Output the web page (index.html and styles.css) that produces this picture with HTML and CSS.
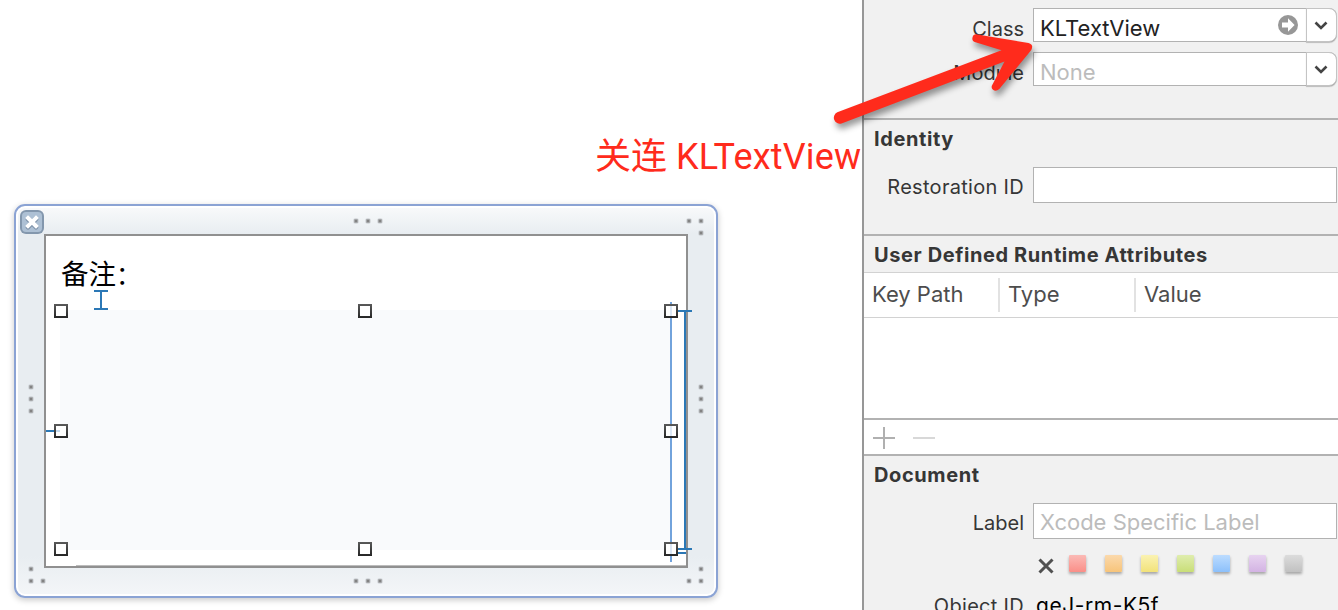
FILE: index.html
```html
<!DOCTYPE html>
<html lang="zh">
<head>
<meta charset="utf-8">
<title>KLTextView</title>
<link rel="stylesheet" href="styles.css">
</head>
<body>
<main class="canvas">
  <div class="note">关连 <span class="note-latin">KLTextView</span></div>
  <div class="frame">
    <div class="view">
      <div class="remark">备注<span class="colon">：</span></div>
      <div class="textview"></div>
    </div>
  </div>
  <svg class="guides" width="740" height="610" viewBox="0 0 740 610">
    <defs>
      <linearGradient id="h" x1="0" y1="0" x2="0" y2="1"><stop offset="0" stop-color="#5a5a5a"/><stop offset="1" stop-color="#262626"/></linearGradient>
      <g id="d"><circle r="3" fill="#a8adb2" opacity=".35"/><rect x="-2" y="-2" width="4" height="4" rx="1" fill="#a4a6a8"/><rect x="-1" y="-1" width="2" height="2" fill="#828282"/></g>
      <g id="k"><rect x="-7" y="-7" width="14" height="14" fill="url(#h)"/><rect x="-5" y="-5" width="10" height="10" fill="#fff"/></g>
    </defs>
    <rect x="20" y="210" width="24" height="24" rx="6" fill="#8397ad"/>
    <rect x="22" y="212" width="20" height="20" rx="4" fill="#adc0d4"/>
    <path d="M28 218l8 8M36 218l-8 8" transform="translate(0 1)" stroke="#8095ac" stroke-width="5" stroke-linecap="round"/>
    <path d="M28 218l8 8M36 218l-8 8" stroke="#fff" stroke-width="4" stroke-linecap="square"/>
    <g>
      <use href="#d" x="356" y="221"/><use href="#d" x="368" y="221"/><use href="#d" x="380" y="221"/>
      <use href="#d" x="689" y="221"/><use href="#d" x="701" y="221"/><use href="#d" x="701" y="233"/>
      <use href="#d" x="31" y="387"/><use href="#d" x="31" y="399"/><use href="#d" x="31" y="411"/>
      <use href="#d" x="701" y="387"/><use href="#d" x="701" y="399"/><use href="#d" x="701" y="411"/>
      <use href="#d" x="31" y="569"/><use href="#d" x="31" y="581"/><use href="#d" x="43" y="581"/>
      <use href="#d" x="356" y="581"/><use href="#d" x="368" y="581"/><use href="#d" x="380" y="581"/>
      <use href="#d" x="701" y="569"/><use href="#d" x="689" y="581"/><use href="#d" x="701" y="581"/>
    </g>
    <path d="M76 565.5H686" stroke="#bcbcbc"/>
    <path d="M671 302V562" stroke="#72a3dc" stroke-width="2"/>
    <path d="M94 291h14M94 309h14M101 291v18M46 431h14M685 311v238M678 311h14M678 549h14M672 553h14" stroke="#2b78b6" stroke-width="2"/>
    <use href="#k" x="61" y="311"/><use href="#k" x="365" y="311"/><use href="#k" x="671" y="311"/>
    <use href="#k" x="61" y="431"/><use href="#k" x="671" y="431"/>
    <use href="#k" x="61" y="549"/><use href="#k" x="365" y="549"/><use href="#k" x="671" y="549"/>
    <path d="M56 431h4" stroke="#c5daee" stroke-width="2"/>
    <path d="M671 306v10M671 426v10M671 544v10" stroke="#dbe7f6" stroke-width="2"/>
  </svg>
</main>
<aside class="inspector">
  <section class="custom-class">
    <div class="row">
      <label class="label">Class</label>
      <div class="combo"><span class="value">KLTextView</span>
        <svg class="go" width="20" height="20" viewBox="0 0 20 20"><circle cx="10" cy="10" r="10" fill="#979797"/><path d="M4 7.500h6V3.200L16.600 10 10 16.800V12.500H4z" fill="#fff"/></svg>
        <span class="drop"><svg width="14" height="9" viewBox="0 0 14 9"><path d="M1.500 1.500L7 7l5.500-5.500" fill="none" stroke="#444" stroke-width="2.600"/></svg></span></div>
    </div>
    <div class="row">
      <label class="label">Module</label>
      <div class="combo"><span class="value hint">None</span>
        <span class="drop"><svg width="14" height="9" viewBox="0 0 14 9"><path d="M1.500 1.500L7 7l5.500-5.500" fill="none" stroke="#444" stroke-width="2.600"/></svg></span></div>
    </div>
  </section>
  <section class="identity">
    <h2>Identity</h2>
    <div class="row"><label class="label restoration">Restoration ID</label><div class="field"></div></div>
  </section>
  <section class="attributes">
    <h2>User Defined Runtime Attributes</h2>
    <div class="thead"><span>Key Path</span><span>Type</span><span>Value</span></div>
    <div class="tbody"></div>
    <div class="tools">
      <svg width="71" height="34" viewBox="0 0 71 34"><path d="M9 18h22M20 7v22" stroke="#b0b0b0" stroke-width="2"/><path d="M49 18h22" stroke="#d8d8d8" stroke-width="2"/></svg>
    </div>
  </section>
  <section class="document">
    <h2>Document</h2>
    <div class="row"><label class="label">Label</label><div class="field"><span class="value hint">Xcode Specific Label</span></div></div>
    <div class="swatches">
      <svg width="16" height="16" viewBox="0 0 16 16"><path d="M1.500 1.500l13 13M14.500 1.500l-13 13" stroke="#505050" stroke-width="3"/></svg>
      <i class="sw red"></i><i class="sw orange"></i><i class="sw yellow"></i><i class="sw green"></i><i class="sw blue"></i><i class="sw purple"></i><i class="sw gray"></i>
    </div>
    <div class="row objid"><span class="label">Object ID</span><span class="objval">qeJ-rm-K5f</span></div>
  </section>
</aside>
<svg class="arrow" width="250" height="140" viewBox="820 0 250 140">
  <path d="M837.300 112.300L1001.500 50.200L975.500 42.300A4 4 0 0 1 977.300 34.500L1028.500 43Q1034 44.600 1031.300 50L999.300 89Q996 92.200 993 89.800Q990.500 87.500 992.500 84.500L1004.500 61.500L841.500 123.500A6 6 0 0 1 837.300 112.300Z" fill="#ff2b1c"/>
</svg>
</body>
</html>
```

FILE: styles.css
```css
* { box-sizing: border-box; }
body {
  margin: 0;
  width: 1338px;
  height: 610px;
  overflow: hidden;
  display: flex;
  position: relative;
  background: #fff;
  font-family: Inter, "Noto Sans CJK SC", sans-serif;
}
svg { display: block; flex: none; }
.canvas { width: 862px; flex: none; position: relative; padding: 132px 0 0 14px; }
.note {
  height: 72px;
  padding-left: 581px;
  line-height: 50px;
  font-size: 36px;
  font-family: Roboto, "Noto Sans CJK SC", sans-serif;
  font-weight: 400;
  color: #ff2b1c;
  white-space: nowrap;
}
.note-latin { font-size: 36px; letter-spacing: .2px; }
.frame {
  width: 704px;
  height: 394px;
  border: 2px solid #8ba3d4;
  border-radius: 11px;
  padding: 28px;
  background: linear-gradient(#f9fafb, #e8edf1 28px, #e8edf1 350px, #f4f6f8);
  box-shadow: inset 0 0 0 2px #fff, 0 2px 6px rgba(0, 0, 0, .22);
}
.view {
  width: 644px;
  height: 334px;
  border: 2px solid #909090;
  background: #fff;
  padding-left: 14px;
}
.remark {
  height: 74px;
  padding-left: 1px;
  line-height: 72px;
  font-family: "Noto Sans CJK SC", sans-serif;
  font-weight: 400;
  font-size: 27.5px;
  color: #000;
}
.colon { font-size: 25px; }
.textview { width: 610px; height: 240px; background: #f9fafc; }
.guides { position: absolute; left: 0; top: 0; }
.arrow { position: absolute; left: 820px; top: 0; filter: drop-shadow(2px 5px 3px rgba(0, 0, 0, .4)); }

.inspector { width: 476px; flex: none; border-left: 2px solid #979797; background: #f1f1f1; }
section { border-bottom: 2px solid #b2b2b2; }
h2 {
  margin: 0;
  height: 36px;
  line-height: 38px;
  padding-left: 10px;
  font-size: 20px;
  font-weight: 700;
  letter-spacing: .6px;
  color: #363636;
  white-space: nowrap;
}
.row { display: flex; gap: 9px; }
.label {
  width: 160px;
  text-align: right;
  font-size: 20px;
  line-height: 40px;
  color: #363636;
  white-space: nowrap;
}
.restoration { letter-spacing: .3px; }
.custom-class { height: 120px; padding-top: 8px; display: flex; flex-direction: column; gap: 10px; }
.custom-class .row { height: 34px; }
.custom-class .label { line-height: 42px; }
.combo { width: 304px; height: 34px; background: #fff; border: 1px solid #b2b2b2; border-right: 0; border-radius: 0 8px 8px 0; display: flex; align-items: center; }
.value { flex: 1; padding-left: 6px; font-size: 22px; line-height: 36px; padding-top: 6px; color: #222; white-space: nowrap; }
.field .value { padding-top: 2px; }
.value.hint { color: #bcbcbc; }
.go { margin: 0 8px 0 0; }
.drop {
  width: 31px;
  height: 34px;
  border: 1px solid #c4c4c4;
  border-radius: 0 8px 8px 0;
  background: #fff;
  box-shadow: 0 1px 1px rgba(0, 0, 0, .22);
  display: flex;
  align-items: center;
  padding-left: 7px;
}
.identity { height: 116px; }
.identity .row { padding-top: 11px; }
.field { width: 304px; height: 36px; border: 1px solid #b2b2b2; background: #fff; display: flex; align-items: center; }
.attributes { height: 220px; background: #fff; }
.attributes h2 { background: #f1f1f1; }
.thead { height: 46px; border-top: 1px solid #d2d2d2; border-bottom: 1px solid #d2d2d2; display: flex; align-items: center; font-size: 22px; line-height: 32px; color: #4d4d4d; }
.thead span { width: 136px; height: 34px; border-right: 2px solid #e2e2e2; padding-left: 8px; }
.thead span:last-child { border: 0; }
.tbody { height: 100px; }
.tools { height: 36px; border-top: 2px solid #b2b2b2; }
.document { border: 0; }
.document .row { height: 47px; padding-top: 11px; }
.swatches { display: flex; align-items: center; height: 17px; margin: 16px 0 0 174px; }
.sw { width: 17px; height: 17px; margin-right: 19px; border-radius: 1px; box-shadow: 0 2px 3px rgba(0, 0, 0, .32); }
.swatches svg { margin: 4px 15px 0 0; }
.red { background: linear-gradient(#fbbab6, #fa8f88); }
.orange { background: linear-gradient(#fbd9ac, #f7c47a); }
.yellow { background: linear-gradient(#faf2b2, #f2e27a); }
.green { background: linear-gradient(#dfedae, #c9de78); }
.blue { background: linear-gradient(#bcdcff, #8cc0fb); }
.purple { background: linear-gradient(#e7d3f0, #d3b3e3); }
.gray { background: linear-gradient(#dcdcdc, #c1c1c1); }
.document .objid { padding-top: 14px; gap: 12px; }
.objid .label { letter-spacing: .3px; }
.objval { font-size: 21px; line-height: 40px; letter-spacing: .55px; color: #000; }
```
